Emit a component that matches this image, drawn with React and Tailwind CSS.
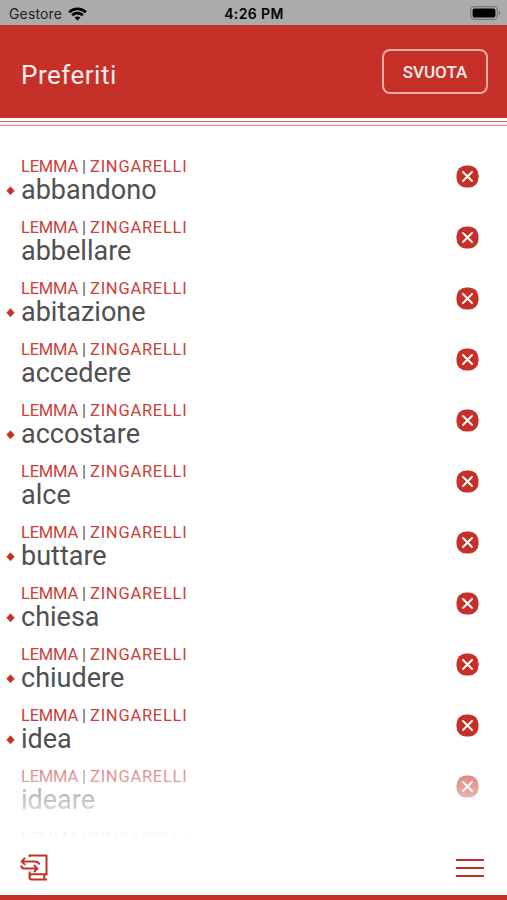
import React, { useState } from "react";

const INITIAL_FAVORITES = [
  { word: "abbandono", marked: true },
  { word: "abbellare", marked: false },
  { word: "abitazione", marked: true },
  { word: "accedere", marked: false },
  { word: "accostare", marked: true },
  { word: "alce", marked: false },
  { word: "buttare", marked: true },
  { word: "chiesa", marked: true },
  { word: "chiudere", marked: true },
  { word: "idea", marked: true },
  { word: "ideare", marked: false },
  { word: "", marked: false },
];

const StatusBar = () => (
  <div className="h-[25px] shrink-0 grid grid-cols-3 items-center bg-[#ababab] pl-[9px] pr-[6px] pt-[2px] text-[14px] leading-none text-black font-['Inter',sans-serif]">
    <div className="flex items-center gap-[6px]">
      <span className="text-[#222] tracking-[0.15px]">Gestore</span>
      <svg width="19" height="14" viewBox="0 0 19 14" fill="none" stroke="#000" strokeWidth="2.7">
        <path d="M1.2 5.2C5.8 .8 13.2 .8 17.8 5.2" />
        <path d="M4.2 8.3C7.1 5.5 11.9 5.5 14.8 8.3" />
        <path d="M9.5 13.6L6.6 10.7C8.2 9.2 10.8 9.2 12.4 10.7Z" fill="#000" stroke="none" />
      </svg>
    </div>
    <span className="text-center font-semibold pr-[2px] tracking-[0.4px]">4:26 PM</span>
    <svg className="justify-self-end -mt-px" width="31" height="14" viewBox="0 0 31 14">
      <rect x=".7" y=".7" width="26.6" height="12.6" rx="3.6" fill="none" stroke="#777" strokeWidth="1.2" />
      <rect x="2.6" y="2.4" width="22.8" height="9.2" rx="2" fill="#000" />
      <path d="M28.6 4.6C30.7 5.4 30.7 8.6 28.6 9.4Z" fill="#777" />
    </svg>
  </div>
);

const Header = ({ onClear }) => (
  <header className="shrink-0">
    <div className="h-[93px] bg-[#c53129] flex items-center justify-between pl-[21px] pr-[19px]">
      <h1 className="text-[26px] leading-none text-[#fdeceb] tracking-[0.5px] pt-[7px]">Preferiti</h1>
      <button
        onClick={onClear}
        className="w-[106px] h-[45px] rounded-[8px] border-2 border-[#efada8] text-[#fdeceb] text-[17px] font-medium leading-none pt-[2px]"
      >
        SVUOTA
      </button>
    </div>
    <div className="h-[3px] bg-white" />
    <div className="h-px bg-[#cf6660]" />
    <div className="h-[3px] bg-[#fdf3f2]" />
    <div className="h-px bg-[#d98580]" />
  </header>
);

const FavoriteRow = ({ item, onRemove }) => (
  <li className="h-[61.05px] flex items-start justify-between pl-[6px] pr-[28px]">
    <div className="flex">
      <div className="w-[15px] pt-[30px]">
        {item.marked && (
          <svg width="9" height="10" viewBox="0 0 9 10" fill="#c53129">
            <path d="M4.5 .8L8.2 4.8L4.5 8.8L.8 4.8Z" stroke="#c53129" strokeWidth=".8" strokeLinejoin="round" />
          </svg>
        )}
      </div>
      <div>
        <p className="flex text-[16.5px] leading-[18px] pt-[2px] text-[#cb4039] whitespace-nowrap">
          <span className="w-[61px] tracking-[-0.2px]">LEMMA</span>
          <span className="w-[8px] text-[#555]">|</span>
          <span className="tracking-[0.75px]">ZINGARELLI</span>
        </p>
        <p className="text-[27px] leading-[28px] text-[#505050]">{item.word}</p>
      </div>
    </div>
    <button onClick={onRemove} className="mt-[9px]" aria-label="Rimuovi">
      <svg width="23" height="23" viewBox="0 0 23 23">
        <rect x=".5" y=".5" width="22" height="22" rx="9.5" fill="#c53129" />
        <path d="M7 7L16 16M16 7L7 16" stroke="#fff" strokeWidth="1.9" strokeLinecap="round" />
      </svg>
    </button>
  </li>
);

const BottomBar = () => (
  <footer className="h-[64px] shrink-0 bg-white border-b-[5px] border-[#c53129] flex items-start justify-between pl-[20px] pr-[23px]">
    <button className="mt-[17px]" aria-label="Dizionari">
      <svg width="29" height="28" viewBox="0 0 29 28" fill="none" stroke="#c53129" strokeWidth="2" strokeLinecap="round" strokeLinejoin="round">
        <path d="M9.7 2.4H26.5V21.3" />
        <path d="M9.6 2.4V3.2" />
        <path d="M9.6 19.5V24.2C9.6 25.6 10.2 26.4 11.6 26.4H26.3" />
        <path d="M9.7 22.3C10.1 21.5 10.8 21.3 11.6 21.3H26.5M24.3 21.5V26.2" />
        <path d="M4.6 5.4L1.6 8.4L4.6 11.4M2 8.4H14.5C17 8.4 18.6 9.2 19 10.8" />
        <path d="M14.4 12.6L17.4 15.6L14.4 18.6M17.2 15.6H5.5C3 15.6 1.6 14.6 1.3 13.2" />
      </svg>
    </button>
    <button className="mt-[19px] flex flex-col gap-[5.7px] py-[4px]" aria-label="Menu">
      <span className="block w-[28px] h-[2.3px] bg-[#c53129]" />
      <span className="block w-[28px] h-[2.3px] bg-[#c53129]" />
      <span className="block w-[28px] h-[2.3px] bg-[#c53129]" />
    </button>
  </footer>
);

const App = () => {
  const [favorites, setFavorites] = useState(INITIAL_FAVORITES);

  const handleRemove = (word) => {
    setFavorites(favorites.filter((f) => f.word !== word));
  };

  return (
    <div className="h-[900px] w-full flex flex-col overflow-hidden bg-white font-['Roboto',sans-serif]">
      <StatusBar />
      <Header onClear={() => setFavorites([])} />
      <main className="relative flex-1 min-h-0 overflow-hidden">
        <ul className="pt-[30px]">
          {favorites.map((item) => (
            <FavoriteRow key={item.word} item={item} onRemove={() => handleRemove(item.word)} />
          ))}
        </ul>
        {/* fade at the end of the list */}
        <div className="absolute inset-x-0 bottom-0 h-[76px] pointer-events-none bg-linear-to-b from-white/30 from-0% via-white/60 via-45% to-white/95 to-90%" />
      </main>
      <BottomBar />
    </div>
  );
};

export default App;
